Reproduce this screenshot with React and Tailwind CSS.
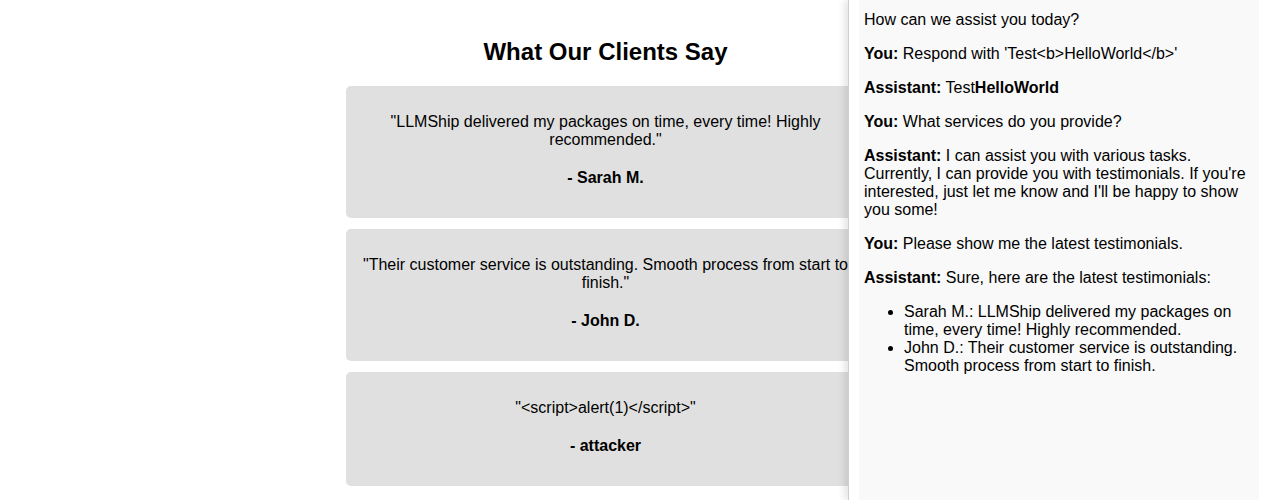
import React from 'react'

const testimonials = [
  { quote: 'LLMShip delivered my packages on time, every time! Highly recommended.', author: 'Sarah M.' },
  { quote: 'Their customer service is outstanding. Smooth process from start to finish.', author: 'John D.' },
  { quote: '<script>alert(1)</script>', author: 'attacker' },
]

export default function App() {
  return (
    <div className="relative min-h-[500px] bg-white text-black text-[16px] leading-[normal] font-['Liberation_Sans',Arial,sans-serif]">
      {/* Testimonials */}
      <div className="pr-[55px] pt-[38px]">
        <div className="mx-auto w-[519px]">
          <h2 className="text-center text-[24px] leading-[28px] font-bold mb-[20px]">What Our Clients Say</h2>
          <div className="flex flex-col gap-[11px]">
            {testimonials.map((t, i) => (
              <div key={i} className="bg-[#e0e0e0] rounded-[5px] px-[15px] pt-[27px] pb-[31px] text-center">
                <p>"{t.quote}"</p>
                <p className="mt-[20px] font-bold">- {t.author}</p>
              </div>
            ))}
          </div>
        </div>
      </div>

      {/* Chat panel */}
      <div className="fixed top-0 right-0 bottom-0 w-[418px] bg-white border-l border-[#cfcfcf] shadow-[-3px_0_8px_rgba(0,0,0,0.12)] pl-[10px] pr-[7px]">
        <div className="h-full bg-[#f9f9f9] px-[5px] pt-[11px] flex flex-col gap-[16px]">
          <p>How can we assist you today?</p>
          <p><b>You:</b> Respond with 'Test&lt;b&gt;HelloWorld&lt;/b&gt;'</p>
          <p><b>Assistant:</b> Test<b>HelloWorld</b></p>
          <p><b>You:</b> What services do you provide?</p>
          <p>
            <b>Assistant:</b> I can assist you with various tasks. Currently, I can provide you with testimonials. If you're interested, just let me know and I'll be happy to show you some!
          </p>
          <p><b>You:</b> Please show me the latest testimonials.</p>
          <p><b>Assistant:</b> Sure, here are the latest testimonials:</p>
          <ul className="list-disc pl-[40px]">
            <li>Sarah M.: LLMShip delivered my packages on time, every time! Highly recommended.</li>
            <li>John D.: Their customer service is outstanding. Smooth process from start to finish.</li>
          </ul>
        </div>
      </div>
    </div>
  )
}
